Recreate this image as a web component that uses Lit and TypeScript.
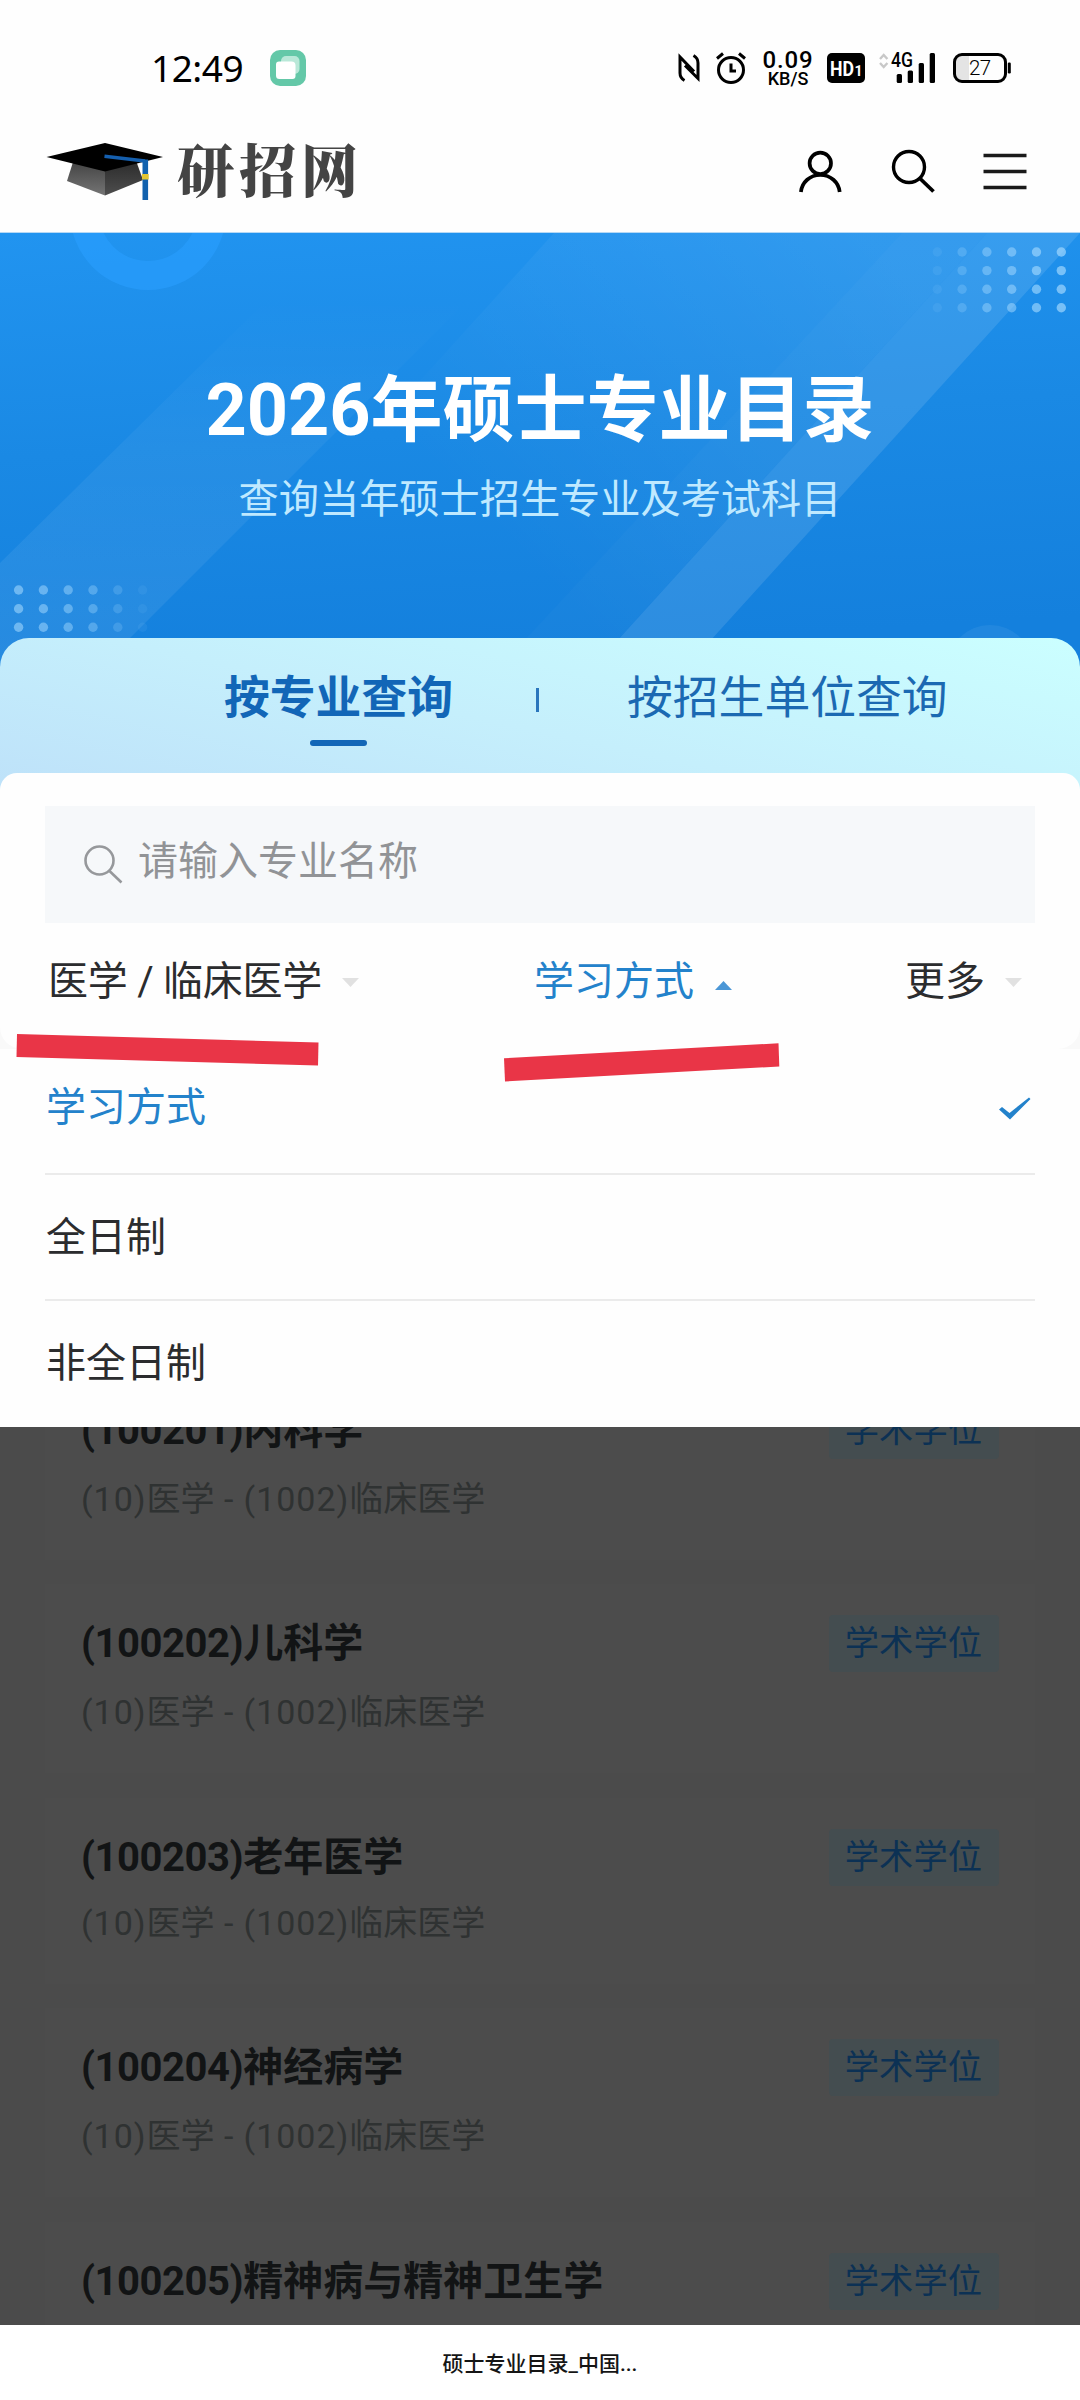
import { LitElement, html, svg, css } from "lit";
import { customElement, property, state } from "lit/decorators.js";
import { classMap } from "lit/directives/class-map.js";

interface Major {
  code: string;
  name: string;
  tight?: boolean;
}

const MAJORS: Major[] = [
  { code: "100201", name: "内科学" },
  { code: "100202", name: "儿科学" },
  { code: "100203", name: "老年医学", tight: true },
  { code: "100204", name: "神经病学" },
  { code: "100205", name: "精神病与精神卫生学" },
];

const MODES = ["学习方式", "全日制", "非全日制"];

@customElement("status-bar")
class StatusBar extends LitElement {
  static styles = css`
    :host {
      display: flex;
      align-items: center;
      height: 136px;
      box-sizing: border-box;
      padding: 0 69px 0 151px;
      font-family: Inter, "Liberation Sans", sans-serif;
      color: #000;
    }
    svg { display: block; flex: none; overflow: visible; }
    .clock {
      font-family: "Noto Sans", "Liberation Sans", sans-serif;
      font-size: 37px;
      line-height: 44px;
      width: 119px;
      letter-spacing: -0.500px;
      flex: none;
    }
    .spacer { flex: 1; }
    .nfc { margin-right: 16px; }
    .alarm { margin-right: 14px; }
    .speed {
      width: 56px;
      margin-right: 11px;
      padding-top: 2px;
      display: flex;
      flex-direction: column;
      align-items: center;
      font-family: Roboto, sans-serif;
      font-weight: 500;
    }
    .rate { font-size: 24px; line-height: 20px; letter-spacing: 0.900px; }
    .unit { font-size: 18px; line-height: 18px; }
    .hd { margin-right: 14px; }
    .signal { margin-right: 17px; }
  `;

  render() {
    return html`
      <div class="clock">12:49</div>
      <svg width="36" height="36" viewBox="0 0 36 36">
        <rect width="36" height="36" rx="10" fill="#64c8a8" />
        <rect x="11" y="6" width="18.500" height="18" rx="5" fill="#b9e8d8" />
        <path d="M9 11.500h12.500a4 4 0 0 1 4 4V26a3 3 0 0 1-3 3H9.500a3.500 3.500 0 0 1-3.500-3.500V14.500a3 3 0 0 1 3-3z" fill="#fff" />
      </svg>
      <div class="spacer"></div>
      <svg class="nfc" width="22" height="28" viewBox="0 0 22 28" fill="none" stroke="#000" stroke-width="3">
        <path d="M6.500 26.500C3 24.500 2 22.500 2 19V3L16 17.500M15.500 1.500c3.500 2 4.500 4 4.500 7.500v15.500L7 11.500" />
      </svg>
      <svg class="alarm" width="30" height="32" viewBox="0 0 30 32" fill="none" stroke="#000" stroke-width="3">
        <circle cx="15" cy="18" r="12.500" />
        <path d="M15 11.500V19h5M1 6.500 7 1.500M29 6.500 23 1.500" />
      </svg>
      <div class="speed"><span class="rate">0.09</span><span class="unit">KB/S</span></div>
      <svg class="hd" width="38" height="30" viewBox="0 0 38 30" font-family="Roboto, sans-serif" font-weight="700" fill="#fff">
        <rect width="38" height="30" rx="5" fill="#000" />
        <text x="3" y="22.500" font-size="21" textLength="24" lengthAdjust="spacingAndGlyphs">HD</text>
        <text x="27.500" y="22.500" font-size="14">1</text>
      </svg>
      <svg class="signal" width="57" height="30" viewBox="0 0 57 30">
        <path d="M1 6 4.700 2 8.400 6M1 10l3.700 4 3.700-4" fill="none" stroke="#c8c8c8" stroke-width="2.400" />
        <text x="12" y="14.300" font-size="19.500" font-weight="500" font-family="Roboto, sans-serif" textLength="22" lengthAdjust="spacingAndGlyphs">4G</text>
        <rect x="17.700" y="21" width="5.300" height="9" rx="1.500" />
        <rect x="28.700" y="17.500" width="5.300" height="12.500" rx="1.500" />
        <rect x="39.700" y="10" width="5.300" height="20" rx="1.500" />
        <rect x="50.700" y="0" width="5.300" height="30" rx="1.500" />
      </svg>
      <svg width="58" height="30" viewBox="0 0 58 30">
        <path d="M9 2H16V28H9a7 7 0 0 1-7-7V9a7 7 0 0 1 7-7z" fill="#e4e4e4" />
        <rect x="1.500" y="1.500" width="51" height="27" rx="7.500" fill="none" stroke="#000" stroke-width="3" />
        <rect x="54.800" y="9.500" width="3" height="11" rx="1.200" />
        <text x="16" y="22.300" font-size="20.500" font-weight="300" font-family="Roboto, sans-serif" textLength="22">27</text>
      </svg>
    `;
  }
}

@customElement("site-header")
class SiteHeader extends LitElement {
  static styles = css`
    :host {
      display: flex;
      align-items: flex-start;
      height: 97px;
      box-sizing: border-box;
      padding: 6px 53px 0 46px;
      border-bottom: 1px solid #b5d8f5;
    }
    svg { display: block; flex: none; }
    .name {
      margin: -3px 0 0 13px;
      font-family: "Noto Serif CJK SC", "Noto Sans CJK SC", serif;
      font-weight: 900;
      font-size: 57px;
      line-height: 56px;
      letter-spacing: 5px;
      color: #444;
      flex: 1;
    }
    .actions { display: flex; gap: 48.500px; padding-top: 7px; }
  `;

  render() {
    return html`
      <svg width="118" height="60" viewBox="46 142 118 60">
        <defs>
          <linearGradient id="l" x1="0" x2="0" y1="0" y2="1"><stop offset="0" stop-color="#444" /><stop offset="1" stop-color="#757575" /></linearGradient>
          <linearGradient id="r" x1="0" x2="0" y1="0" y2="1"><stop offset="0" stop-color="#2c2c2c" /><stop offset="1" stop-color="#4e4e4e" /></linearGradient>
        </defs>
        <path d="M73 162 67 181l38 14.500V168z" fill="url(#l)" />
        <path d="M136.500 162l6.500 18-38 15.500V168z" fill="url(#r)" />
        <path d="M46.500 157 105 143l58 14-58 14.500z" fill="#000" />
        <path d="M104.500 156.300l40.500 4.700" fill="none" stroke="#155fae" stroke-width="3.600" />
        <path d="M145.300 159.500V200" fill="none" stroke="#1161ae" stroke-width="5.600" />
        <rect x="142" y="174" width="6.700" height="5.500" fill="#e3c531" />
      </svg>
      <div class="name">研招网</div>
      <div class="actions">
        <svg width="44" height="46" viewBox="0 0 44 46" fill="none" stroke="#000" stroke-width="3.700">
          <circle cx="22.300" cy="14.300" r="10.700" />
          <path d="M2.900 43C4 33 12 26 22.300 26S40.600 33 41.700 43" />
        </svg>
        <svg width="44" height="46" viewBox="0 0 44 46" fill="none" stroke="#000" stroke-width="3.400">
          <circle cx="18" cy="18" r="15.500" />
          <path d="M29 29.500 42.500 42.500" stroke-width="3.800" />
        </svg>
        <svg width="44" height="46" viewBox="0 0 44 46" fill="none" stroke="#1a1a1a" stroke-width="3.400">
          <path d="M.5 6.500h43M.5 22.500h43M.5 38.500h43" />
        </svg>
      </div>
    `;
  }
}

@customElement("hero-banner")
class HeroBanner extends LitElement {
  static styles = css`
    :host {
      display: flex;
      flex-direction: column;
      align-items: center;
      position: relative;
      height: 440px;
      box-sizing: border-box;
      padding-top: 136px;
      overflow: hidden;
    }
    .art { position: absolute; inset: 0; }
    .title {
      position: relative;
      font-size: 72px;
      line-height: 84px;
      font-weight: 700;
      color: #fff;
    }
    .sub {
      position: relative;
      margin-top: 25px;
      font-size: 40.200px;
      line-height: 44px;
      color: #bfe9ff;
    }
  `;

  private dots(x: number, ys: number[], alphas: number[]) {
    return alphas.map((a, i) =>
      ys.map((y) => svg`<circle cx=${x + i * 24.8} cy=${y} r="4.700" fill="#a9dcff" fill-opacity=${a} />`),
    );
  }

  render() {
    return html`
      <svg class="art" width="1080" height="440" viewBox="0 0 1080 440">
        <defs>
          <linearGradient id="bg" x1="0" y1="0" x2="0.150" y2="1">
            <stop offset="0" stop-color="#2194f0" />
            <stop offset="0.500" stop-color="#1a89e4" />
            <stop offset="1" stop-color="#1480dd" />
          </linearGradient>
          <linearGradient id="left" x1="0" y1="1" x2="0" y2="0">
            <stop offset="0" stop-color="#fff" stop-opacity="0.080" />
            <stop offset="0.500" stop-color="#fff" stop-opacity="0.050" />
            <stop offset="0.850" stop-color="#fff" stop-opacity="0" />
          </linearGradient>
          <linearGradient id="wide" gradientUnits="userSpaceOnUse" x1="860" y1="0" x2="520" y2="330">
            <stop offset="0" stop-color="#fff" stop-opacity="0.080" />
            <stop offset="1" stop-color="#fff" stop-opacity="0" />
          </linearGradient>
        </defs>
        <rect width="1080" height="440" fill="url(#bg)" />
        <circle cx="148" cy="-21" r="63.500" fill="none" stroke="#2a9fff" stroke-opacity="0.600" stroke-width="29" />
        <path d="M335 0 0 330V440H95L535 0z" fill="url(#left)" />
        <path d="M554 0H987L588 440H155z" fill="url(#wide)" />
        <path d="M902 0H987L588 440H494z" fill="#fff" fill-opacity="0.020" />
        <path d="M987 0H1080L681 440H588z" fill="#fff" fill-opacity="0.110" />
        <circle cx="990" cy="435" r="43" fill="#fff" fill-opacity="0.060" />
        ${this.dots(937.3, [19, 37.6, 56.2, 74.8], [0.1, 0.25, 0.42, 0.5, 0.6, 0.65])}
        ${this.dots(18.6, [357, 375.7, 394.3], [0.55, 0.5, 0.45, 0.35, 0.2, 0.08])}
      </svg>
      <div class="title">2026年硕士专业目录</div>
      <div class="sub">查询当年硕士招生专业及考试科目</div>
    `;
  }
}

@customElement("query-tabs")
class QueryTabs extends LitElement {
  static styles = css`
    :host {
      display: flex;
      position: relative;
      height: 170px;
      margin-top: -35px;
      box-sizing: border-box;
      padding: 34px 0 0 224px;
      border-radius: 29px 29px 0 0;
      background: linear-gradient(12deg, #bde0f9 0%, #c5effc 48%, #cbffff 100%);
      font-size: 45.800px;
      line-height: 54px;
      color: #1b69b2;
    }
    .tab { display: flex; flex-direction: column; align-items: center; }
    .active { font-weight: 700; color: #1266b7; }
    .bar { width: 57px; height: 6px; border-radius: 3px; background: #1266b7; margin-top: 14px; }
    .divider { width: 3px; height: 24px; background: #2a76bd; margin: 16px 88px 0 83px; }
  `;

  render() {
    return html`
      <div class="tab active">按专业查询<span class="bar"></span></div>
      <span class="divider"></span>
      <div class="tab">按招生单位查询</div>
    `;
  }
}

@customElement("filter-panel")
class FilterPanel extends LitElement {
  static styles = css`
    :host {
      display: block;
      position: relative;
      height: 276px;
      margin-top: -35px;
      box-sizing: border-box;
      padding: 33px 45px 0;
      border-radius: 17px 17px 22px 22px;
      background: #fefefe;
      font-size: 40px;
    }
    svg { display: block; flex: none; }
    .search {
      display: flex;
      align-items: center;
      height: 117px;
      box-sizing: border-box;
      padding: 0 39px 6px;
      background: #f6f8fa;
      color: #919396;
      line-height: 48px;
    }
    .search svg { margin: 5px 15px 0 0; }
    .filters {
      display: flex;
      align-items: center;
      height: 118px;
      padding: 0 13px 0 3px;
      color: #2b2c2e;
      line-height: 48px;
    }
    .item { display: flex; align-items: center; }
    .first { width: 486px; letter-spacing: -0.250px; }
    .second { flex: 1; }
    .open { color: #2382cb; }
    .item svg { margin-left: 20px; }
    .open svg { margin-top: 7px; margin-left: 21px; }
  `;

  render() {
    return html`
      <div class="search">
        <svg width="39" height="39" viewBox="0 0 39 39" fill="none" stroke="#96989b" stroke-width="2.600">
          <circle cx="15.500" cy="15.500" r="14" />
          <path d="M25.500 26 37.500 37.500" />
        </svg>
        请输入专业名称
      </div>
      <div class="filters">
        <div class="item first">医学 / 临床医学<svg width="17" height="9"><path d="M0 0h17L8.500 9z" fill="#e1e1e1" /></svg></div>
        <div class="item second open">学习方式<svg width="17" height="9"><path d="M0 9h17L8.500 0z" fill="#4b97d6" /></svg></div>
        <div class="item">更多<svg width="17" height="9"><path d="M0 0h17L8.500 9z" fill="#e1e1e1" /></svg></div>
      </div>
    `;
  }
}

@customElement("mode-menu")
class ModeMenu extends LitElement {
  static styles = css`
    :host {
      display: block;
      height: 378px;
      box-sizing: border-box;
      padding: 0 45px;
      background: #fefefe;
      font-size: 40px;
      line-height: 48px;
      color: #2b2c2e;
    }
    .row {
      display: flex;
      align-items: center;
      justify-content: space-between;
      height: 126px;
      box-sizing: border-box;
      padding: 1px 4px 0 1px;
      border-bottom: 2px solid #ebebeb;
    }
    .row:first-child { padding-bottom: 7px; }
    .row:last-child { border-bottom-color: transparent; }
    .selected { color: #2382cb; }
    svg { display: block; }
  `;

  @state() private selected = 0;

  render() {
    return html`${MODES.map(
      (mode, i) => html`<div
        class=${classMap({ row: true, selected: i === this.selected })}
        @click=${() => (this.selected = i)}
      >
        <span>${mode}</span>
        ${i === this.selected
          ? html`<svg width="32" height="23" viewBox="0 0 32 23"><path d="M0 12.500 3 10l7.500 6L30 .500l1.500 1.500L11 22.500z" fill="#2382cb" /></svg>`
          : ""}
      </div>`,
    )}`;
  }
}

@customElement("major-card")
class MajorCard extends LitElement {
  static styles = css`
    :host {
      display: flex;
      flex-direction: column;
      height: 189px;
      margin: 0 45px 24.500px;
      box-sizing: border-box;
      padding: 31px 36px 0 36px;
      background: #4c4c4c;
      flex: none;
    }
    :host([tight]) { height: 186px; }
    .head { display: flex; align-items: center; justify-content: space-between; height: 57px; }
    .title { font-size: 40px; line-height: 48px; font-weight: 700; color: #121415; padding-top: 1px; }
    .code { letter-spacing: -0.450px; }
    .tag {
      height: 57px;
      line-height: 56px;
      padding: 0 17px 0 15.500px;
      border-radius: 4px;
      background: #444d50;
      color: #0c3154;
      font-size: 34.300px;
    }
    .sub { margin-top: 19px; font-size: 34px; line-height: 42px; color: #2f3232; }
    .num { letter-spacing: 0.950px; white-space: pre; }
    :host([tight]) .sub { margin-top: 16px; }
  `;

  @property({ attribute: false }) major!: Major;
  @property({ type: Boolean, reflect: true }) tight = false;

  render() {
    return html`
      <div class="head">
        <span class="title"><span class="code">(${this.major.code})</span>${this.major.name}</span>
        <span class="tag">学术学位</span>
      </div>
      <div class="sub"><span class="num">(10)</span>医学<span class="num"> - (1002)</span>临床医学</div>
    `;
  }
}

@customElement("app-root")
class AppRoot extends LitElement {
  static styles = css`
    :host {
      display: flex;
      flex-direction: column;
      position: relative;
      width: 1080px;
      height: 2400px;
      overflow: hidden;
      background: #f9f9f9;
      font-family: Roboto, "Noto Sans CJK SC", sans-serif;
    }
    .top { background: #fefefe; }
    .results {
      display: flex;
      flex-direction: column;
      height: 898px;
      box-sizing: border-box;
      overflow: hidden;
      background: #4b4b4b;
    }
    .lead { margin-top: -56.500px; }
    .footer {
      height: 75px;
      box-sizing: border-box;
      padding-top: 26px;
      text-align: center;
      background: #fff;
      color: #151515;
      font-size: 21px;
      font-weight: 500;
      line-height: 26px;
    }
    .marks { position: absolute; left: 0; top: 1020px; }
  `;

  render() {
    return html`
      <div class="top">
        <status-bar></status-bar>
        <site-header></site-header>
      </div>
      <hero-banner></hero-banner>
      <query-tabs></query-tabs>
      <filter-panel></filter-panel>
      <mode-menu></mode-menu>
      <div class="results">
        ${MAJORS.map(
          (m, i) => html`<major-card class=${classMap({ lead: i === 0 })} .major=${m} ?tight=${!!m.tight}></major-card>`,
        )}
      </div>
      <div class="footer">硕士专业目录_中国...</div>
      <svg class="marks" width="800" height="70" viewBox="0 1020 800 70" fill="#e93547">
        <path d="M17 1034 318.500 1042.500 318 1065.500 16.500 1057z" />
        <path d="M504 1058.300 778.500 1043.300 779.300 1066.500 505 1081.500z" />
      </svg>
    `;
  }
}
